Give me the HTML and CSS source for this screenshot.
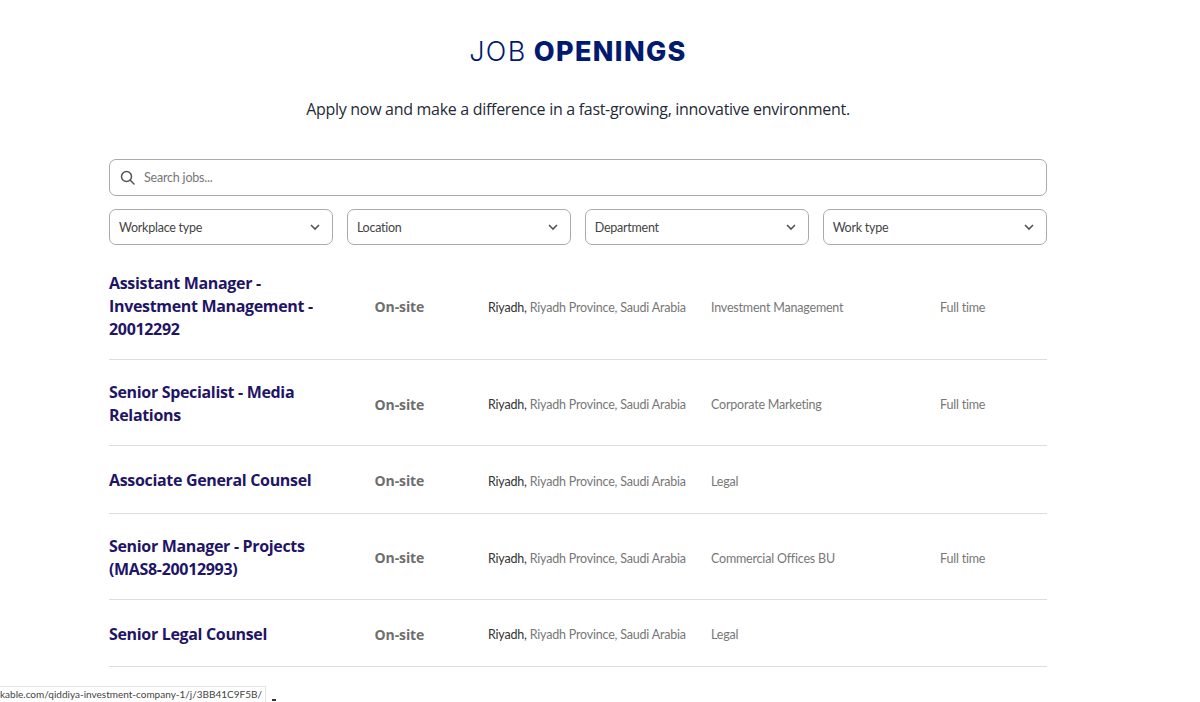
FILE: index.html
```html
<!DOCTYPE html>
<html lang="en">
<head>
    <meta charset="UTF-8">
    <title>Job Openings</title>
    <link rel="stylesheet" href="styles.css">
</head>
<body>

<div class="container">
    <h1><span class="light">JOB</span> OPENINGS</h1>
    <p class="intro">Apply now and make a difference in a fast-growing, innovative environment.</p>

    <div class="search">
        <svg class="search-icon" width="15" height="15" viewBox="0 0 15 15" fill="none" stroke="#555" stroke-width="1.5">
            <circle cx="6.500" cy="6.500" r="5"/>
            <path d="M10.300 10.300l3.700 3.700" stroke-linecap="round"/>
        </svg>
        <span>Search jobs...</span>
    </div>

    <div class="filters">
        <div class="filter">Workplace type
            <svg width="10" height="7" viewBox="0 0 10 7" fill="none" stroke="#555" stroke-width="1.6"><path d="M1 1l4 4 4-4"/></svg>
        </div>
        <div class="filter">Location
            <svg width="10" height="7" viewBox="0 0 10 7" fill="none" stroke="#555" stroke-width="1.6"><path d="M1 1l4 4 4-4"/></svg>
        </div>
        <div class="filter">Department
            <svg width="10" height="7" viewBox="0 0 10 7" fill="none" stroke="#555" stroke-width="1.6"><path d="M1 1l4 4 4-4"/></svg>
        </div>
        <div class="filter">Work type
            <svg width="10" height="7" viewBox="0 0 10 7" fill="none" stroke="#555" stroke-width="1.6"><path d="M1 1l4 4 4-4"/></svg>
        </div>
    </div>

    <div class="jobs">
        <div class="job">
            <div class="job-title">Assistant Manager - Investment Management - 20012292</div>
            <div class="job-place">On-site</div>
            <div class="job-loc"><b>Riyadh,</b> Riyadh Province, Saudi Arabia</div>
            <div class="job-meta">Investment Management</div>
            <div class="job-meta">Full time</div>
        </div>
        <div class="job">
            <div class="job-title">Senior Specialist - Media Relations</div>
            <div class="job-place">On-site</div>
            <div class="job-loc"><b>Riyadh,</b> Riyadh Province, Saudi Arabia</div>
            <div class="job-meta">Corporate Marketing</div>
            <div class="job-meta">Full time</div>
        </div>
        <div class="job">
            <div class="job-title">Associate General Counsel</div>
            <div class="job-place">On-site</div>
            <div class="job-loc"><b>Riyadh,</b> Riyadh Province, Saudi Arabia</div>
            <div class="job-meta">Legal</div>
            <div class="job-meta"></div>
        </div>
        <div class="job">
            <div class="job-title">Senior Manager - Projects (MAS8-20012993)</div>
            <div class="job-place">On-site</div>
            <div class="job-loc"><b>Riyadh,</b> Riyadh Province, Saudi Arabia</div>
            <div class="job-meta">Commercial Offices BU</div>
            <div class="job-meta">Full time</div>
        </div>
        <div class="job">
            <div class="job-title">Senior Legal Counsel</div>
            <div class="job-place">On-site</div>
            <div class="job-loc"><b>Riyadh,</b> Riyadh Province, Saudi Arabia</div>
            <div class="job-meta">Legal</div>
            <div class="job-meta"></div>
        </div>
    </div>
</div>

<!-- Link preview of the browser, bottom left -->
<div class="status-bar">kable.com/qiddiya-investment-company-1/j/3BB41C9F5B/</div>
<div class="status-dash"></div>

</body>
</html>
```

FILE: styles.css
```css
html, body {
    height: 702px;
    overflow: hidden;
}
body {
    margin: 0;
    background-color: #fff;
    font-family: "Open Sans", sans-serif;
    color: #333;
}
.container {
    width: 938px;
    margin-left: 109px;
}
h1 {
    margin: 0;
    padding-top: 33px;
    height: 37px;
    line-height: 37px;
    text-align: center;
    font-family: Inter, sans-serif;
    font-size: 27px;
    font-weight: 800;
    letter-spacing: 1.35px;
    color: #001a70;
}
.light {
    font-weight: 300;
}
.intro {
    margin: 27px 0 0;
    line-height: 24px;
    text-align: center;
    font-size: 16px;
    letter-spacing: -0.3px;
    color: #1f2a37;
}
.search {
    display: flex;
    align-items: center;
    gap: 9px;
    box-sizing: border-box;
    height: 37px;
    margin-top: 38px;
    padding-left: 10px;
    border: 1px solid #aaa;
    border-radius: 7px;
    font-family: Lato, sans-serif;
    font-size: 12.500px;
    letter-spacing: -0.2px;
    color: #777;
}
.filters {
    display: grid;
    grid-template-columns: repeat(4, 1fr);
    gap: 13.5px;
    margin-top: 13px;
}
.filter {
    display: flex;
    align-items: center;
    justify-content: space-between;
    box-sizing: border-box;
    height: 36px;
    padding: 0 12px 0 9px;
    border: 1px solid #aaa;
    border-radius: 7px;
    font-family: Lato, sans-serif;
    font-size: 12.500px;
    letter-spacing: -0.25px;
    color: #444;
}
.jobs {
    margin-top: 6px;
}
.job {
    display: grid;
    grid-template-columns: 265.500px 113.500px 223px 229px 1fr;
    align-items: center;
    box-sizing: border-box;
    min-height: 67.500px;
    padding: 21px 0 18px;
    border-bottom: 1px solid #ddd;
}
.job-title {
    width: 220px;
    font-size: 16px;
    font-weight: 700;
    line-height: 23px;
    letter-spacing: -0.33px;
    color: #1f1566;
}
.job-place {
    font-size: 14px;
    font-weight: 700;
    letter-spacing: -0.1px;
    color: #6e6e6e;
}
.job-loc {
    padding-top: 1px;
    font-family: Lato, sans-serif;
    font-size: 12.500px;
    letter-spacing: -0.2px;
    color: #777;
}
.job-loc b {
    font-weight: 400;
    color: #333;
}
.job-meta {
    padding-top: 1px;
    font-family: Lato, sans-serif;
    font-size: 12.500px;
    letter-spacing: -0.2px;
    color: #777;
}
.status-bar {
    position: fixed;
    left: 0;
    bottom: 0;
    box-sizing: border-box;
    width: 266px;
    height: 16px;
    border: 1px solid #dde5e5;
    border-left: none;
    border-bottom: none;
    background-color: #fff;
    font-family: Lato, sans-serif;
    font-size: 10px;
    line-height: 15px;
    white-space: nowrap;
    color: #444;
}
.status-dash {
    position: fixed;
    left: 272px;
    top: 699px;
    width: 4px;
    height: 2px;
    background-color: #333;
}
```
